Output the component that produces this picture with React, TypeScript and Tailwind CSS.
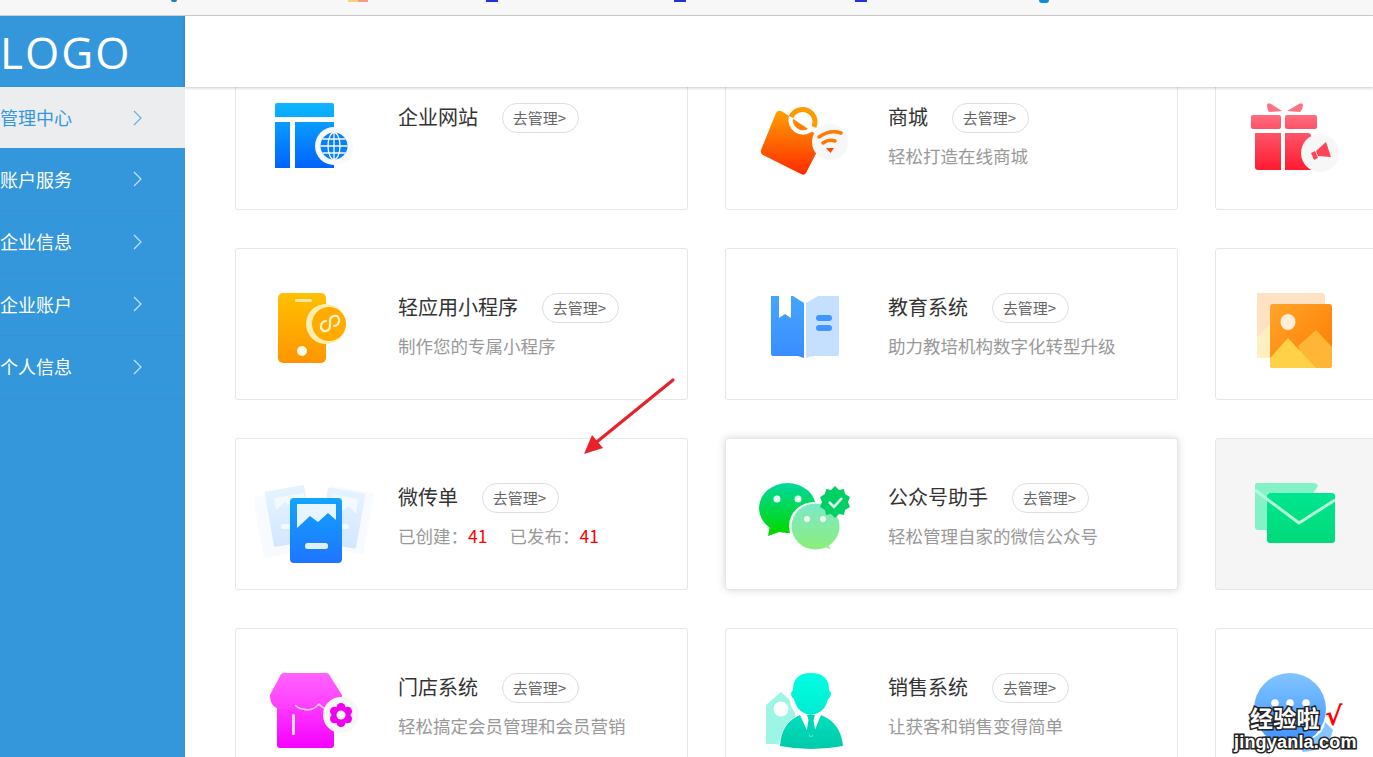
import type { ReactNode } from "react";

const menu = ["管理中心", "账户服务", "企业信息", "企业账户", "个人信息"];

function Grad({ id, from, to }: { id: string; from: string; to: string }) {
  return (
    <linearGradient id={id} x1="0" y1="0" x2="0" y2="1">
      <stop offset="0" stopColor={from} />
      <stop offset="1" stopColor={to} />
    </linearGradient>
  );
}

function IconBox({ children }: { children: ReactNode }) {
  return (
    <svg width="120" height="100" viewBox="0 0 120 100" className="mr-[23px] shrink-0">
      {children}
    </svg>
  );
}

function SiteIcon() {
  return (
    <IconBox>
      <defs>
        <Grad id="site1" from="#12b5ff" to="#06aaff" />
        <Grad id="site2" from="#0a9cff" to="#0062ff" />
      </defs>
      <path d="M20 7a2 2 0 0 1 2-2h55a2 2 0 0 1 2 2v12H20z" fill="url(#site1)" />
      <rect x="20" y="24" width="15" height="46" fill="url(#site2)" />
      <rect x="40" y="24" width="39" height="46" fill="url(#site2)" />
      <circle cx="79" cy="48" r="19" fill="#f8f9fb" />
      <circle cx="79" cy="48" r="13.5" fill="#0a80f5" />
      <g fill="none" stroke="#f8f9fb" strokeWidth="1.3">
        <ellipse cx="79" cy="48" rx="6" ry="13.5" />
        <path d="M79 34.5v27M65.5 48h27M67.5 41h23M67.5 55h23" />
      </g>
    </IconBox>
  );
}

function ShopIcon() {
  return (
    <IconBox>
      <defs>
        <Grad id="shop1" from="#ffa000" to="#ff2a00" />
      </defs>
      <path d="M38 14l37 25q3 2 2 5L61 75q-2 3-5 1L18 57q-3-2-2-5L31 15q2-4 7-1z" fill="url(#shop1)" />
      <path d="M46 19A12.500 12.500 0 0 0 65.500 32" fill="none" stroke="#fff" strokeWidth="4.500" strokeLinecap="round" />
      <path d="M46 19A12.500 12.500 0 1 1 69 29" fill="none" stroke="#ff9a00" strokeWidth="5" />
      <circle cx="85" cy="44" r="18" fill="#f7f7f7" />
      <g fill="none" stroke="#ff7a00" strokeWidth="3.500" strokeLinecap="round">
        <path d="M74 39q11-8 22-4" />
        <path d="M78 45q6-4 12-2" />
      </g>
      <path d="M81 50l8 0-3.500 5z" fill="#ff4b00" />
    </IconBox>
  );
}

function GiftIcon() {
  return (
    <IconBox>
      <defs>
        <Grad id="gift1" from="#ff6c7c" to="#ff5268" />
        <Grad id="gift2" from="#ff5468" to="#ff1a2e" />
      </defs>
      <path d="M32 7q1-3 4-1l11 7-13 1q-2-3-2-7zM68 7q-1-3-4-1l-12 7 13 1q3-3 3-7z" fill="#ff7083" />
      <rect x="16" y="17" width="30" height="14" rx="2" fill="url(#gift1)" />
      <rect x="50" y="17" width="32" height="14" rx="2" fill="url(#gift1)" />
      <path d="M20 35h26v37H23a3 3 0 0 1-3-3z" fill="url(#gift2)" />
      <path d="M50 35h23a3 3 0 0 1 3 3v34H50z" fill="url(#gift2)" />
      <circle cx="85" cy="55" r="19" fill="#f7f7f7" />
      <path d="M81 53l10-9 5 15-13-1z" fill="#ff4458" />
      <path d="M76 55l4-2 3 7-4 2z" fill="#ff4458" />
    </IconBox>
  );
}

function PhoneIcon() {
  return (
    <IconBox>
      <defs>
        <Grad id="phone1" from="#ffc000" to="#ff9500" />
      </defs>
      <rect x="23" y="5" width="48" height="70" rx="5" fill="url(#phone1)" />
      <rect x="40" y="11" width="17" height="3" rx="1.500" fill="#ffe9a8" />
      <circle cx="47" cy="63" r="5" fill="#fffbe8" />
      <circle cx="71" cy="36" r="20" fill="#fdeeb2" />
      <circle cx="74" cy="36" r="17" fill="#ffab00" />
      <path d="M66 40c2 5 9 4 9-3v-4c0-6 8-7 9-2 1 4-2 7-5 7M66 40c-1-4 2-7 5-7" fill="none" stroke="#fff3c8" strokeWidth="2.200" strokeLinecap="round" />
    </IconBox>
  );
}

function BookIcon() {
  return (
    <IconBox>
      <defs>
        <Grad id="book1" from="#44a6ff" to="#3a8cff" />
      </defs>
      <path d="M26 8h8v22l6-4 6 4V8h2l11 7v55l-6-2H28a2 2 0 0 1-2-2z" fill="url(#book1)" />
      <path d="M61 15l12-7h21v58a2 2 0 0 1-2 2H67l-6 2z" fill="#c5e0ff" />
      <rect x="71" y="27" width="16" height="6" rx="3" fill="#3f96ff" />
      <rect x="71" y="37" width="16" height="6" rx="3" fill="#3f96ff" />
    </IconBox>
  );
}

function PictureIcon() {
  return (
    <IconBox>
      <defs>
        <linearGradient id="pic1" x1="0" y1="0" x2="1" y2="1">
          <stop offset="0" stopColor="#ffa52a" />
          <stop offset="1" stopColor="#ff7a00" />
        </linearGradient>
      </defs>
      <path d="M22 5h65a3 3 0 0 1 3 3v62H22z" fill="#ffe2c4" />
      <path d="M22 50l13-14v34H22z" fill="#fff0c4" />
      <rect x="35" y="16" width="62" height="64" rx="3" fill="url(#pic1)" />
      <ellipse cx="53" cy="34" rx="7.500" ry="8" fill="#ffeed8" />
      <path d="M63 58l18-16 16 17v18a3 3 0 0 1-3 3H72z" fill="#ffb637" />
      <path d="M35 70l18-20 28 30H38a3 3 0 0 1-3-3z" fill="#ffd148" />
    </IconBox>
  );
}

function FlyerIcon() {
  return (
    <IconBox>
      <defs>
        <Grad id="fly1" from="#12a4ff" to="#1e74ff" />
        <Grad id="fly2" from="#e4f3ff" to="#d2e7ff" />
      </defs>
      <rect x="3" y="14" width="52" height="62" transform="rotate(-10 29 45)" fill="#f7fbff" />
      <rect x="70" y="11" width="44" height="62" transform="rotate(10 92 42)" fill="#f7fbff" />
      <rect x="14" y="10" width="40" height="56" rx="2" transform="rotate(-10 34 38)" fill="url(#fly2)" />
      <rect x="68" y="12" width="38" height="56" rx="2" transform="rotate(10 87 40)" fill="url(#fly2)" />
      <path d="M19 20l30-5 3 14-8-7-8 6-6-4-9 8z" fill="#f2f9ff" />
      <path d="M77 16l26 5-2 15-7-8-7 5-8-3z" fill="#f2f9ff" />
      <rect x="26" y="46" width="12" height="5" rx="2.500" fill="#f2f9ff" />
      <rect x="85" y="46" width="9" height="5" rx="2.500" fill="#f2f9ff" />
      <rect x="35" y="20" width="52" height="65" rx="4" fill="url(#fly1)" />
      <path d="M42 26H81V42L73 35 63 44 55 38 42 50z" fill="#e8f5ff" />
      <rect x="50" y="65" width="23" height="6" rx="2.500" fill="#dff0ff" />
    </IconBox>
  );
}

function WechatIcon() {
  return (
    <IconBox>
      <defs>
        <Grad id="we1" from="#00d8a0" to="#00d900" />
        <Grad id="we2" from="#7be9c8" to="#8ced7c" />
      </defs>
      <path d="M25 47l-2 11 14-5z" fill="#00d900" />
      <ellipse cx="42.500" cy="30" rx="28.500" ry="25" fill="url(#we1)" />
      <circle cx="32" cy="21" r="3.500" fill="#e8fff4" />
      <circle cx="53" cy="21" r="3.500" fill="#e8fff4" />
      <path d="M79 62l7 9-14-4z" fill="#8ced7c" />
      <ellipse cx="69.500" cy="48" rx="25.500" ry="24" fill="#f4fff8" />
      <ellipse cx="70.500" cy="48.500" rx="24" ry="23" fill="url(#we2)" />
      <circle cx="62" cy="41" r="3" fill="#f0fff8" />
      <circle cx="78" cy="41" r="3" fill="#f0fff8" />
      <path d="M90 8l4 4 5-1 1 5 5 3-2 5 2 5-5 3-1 5-5-1-4 4-4-4-5 1-1-5-5-3 2-5-2-5 5-3 1-5 5 1z" fill="#00cf63" />
      <path d="M84 24l5 5 8-9" fill="none" stroke="#e8fff0" strokeWidth="2.500" />
    </IconBox>
  );
}

function MailIcon() {
  return (
    <IconBox>
      <defs>
        <Grad id="mail1" from="#00e690" to="#00da78" />
      </defs>
      <path d="M22 5h56q4 0 5 3l-5 7H32v37h-9a3 3 0 0 1-3-3V7a2 2 0 0 1 2-2z" fill="#83f2c6" />
      <rect x="32" y="15" width="68" height="50" rx="3" fill="url(#mail1)" />
      <path d="M20 12L64 45 100 22" fill="none" stroke="#b8f8dc" strokeWidth="3" strokeLinejoin="round" />
    </IconBox>
  );
}

function StoreIcon() {
  return (
    <IconBox>
      <defs>
        <Grad id="store1" from="#ff63ff" to="#ff3cff" />
        <Grad id="store2" from="#ff45ff" to="#f500ff" />
      </defs>
      <rect x="22" y="30" width="57" height="50" rx="3" fill="url(#store2)" />
      <path d="M29 5H71Q74 5 75 8L87 27Q87 40 76 41 68 41 64 35 56 45 46 40 42 38 40 36 34 42 26 41 15 40 15 27L25 8Q26 5 29 5Z" fill="url(#store1)" />
      <path d="M40 37Q44 41 48 41 57 44 64 36 68 41 74 41" fill="none" stroke="#ffd0ff" strokeWidth="1.500" />
      <rect x="37" y="46" width="3" height="21" rx="1.500" fill="#ffd9ff" />
      <circle cx="86" cy="47" r="18" fill="#f8f7f8" />
      <g fill="#f000f0">
        <circle cx="86" cy="39.500" r="4.500" />
        <circle cx="92.500" cy="43.250" r="4.500" />
        <circle cx="92.500" cy="50.750" r="4.500" />
        <circle cx="86" cy="54.500" r="4.500" />
        <circle cx="79.500" cy="50.750" r="4.500" />
        <circle cx="79.500" cy="43.250" r="4.500" />
        <circle cx="86" cy="47" r="7" />
      </g>
      <circle cx="86" cy="47" r="4.500" fill="#f8f7f8" />
    </IconBox>
  );
}

function PersonIcon() {
  return (
    <IconBox>
      <defs>
        <Grad id="per1" from="#00ffe4" to="#00ecd0" />
        <Grad id="per2" from="#00dfbe" to="#00caa8" />
      </defs>
      <path d="M36 24l14 13v39H21V37z" fill="#9df5e6" />
      <circle cx="36" cy="41" r="7.500" fill="#fff" />
      <ellipse cx="66" cy="27" rx="22" ry="26" fill="#fff" />
      <path d="M48 22q0-17 18-17t18 17l2 3q0 4-3 6-3 14-17 16-14-2-17-16-3-2-3-6z" fill="url(#per1)" />
      <path d="M34 79q1-25 22-33l10 4 10-4q20 8 22 33-32 6-64 0z" fill="#fff" />
      <path d="M35 78q1-23 20-31l10 22 1-1 1 1 9-22q20 8 22 31-32 6-63 0z" fill="url(#per2)" />
      <path d="M62 47h8l-1.500 5 2 12-4.500 5-4.500-5 2-12z" fill="#00d6b4" />
    </IconBox>
  );
}

function BubbleIcon() {
  return (
    <IconBox>
      <defs>
        <Grad id="bub1" from="#80c5ff" to="#3f90ff" />
      </defs>
      <path d="M60 74q28-2 30-20l8 8q-4 20-30 22z" fill="#86c5ff" />
      <circle cx="55" cy="41" r="36" fill="url(#bub1)" />
      <circle cx="40" cy="35" r="3.800" fill="#fff" />
      <circle cx="55" cy="35" r="3.800" fill="#fff" />
      <circle cx="71" cy="35" r="3.800" fill="#fff" />
    </IconBox>
  );
}

function Card({
  icon,
  title,
  desc,
  stats,
  className = "border-[#e6e6e6] bg-white",
}: {
  icon: ReactNode;
  title?: string;
  desc?: string;
  stats?: boolean;
  className?: string;
}) {
  return (
    <div className={`flex h-[152px] rounded-[3px] border pl-[19px] pt-[39px] ${className}`}>
      {icon}
      {title && (
        <div className="pt-[5px]">
          <div className="flex h-[30px] items-center">
            <span className="pb-[2px] text-[20px] leading-[30px] text-[#333]">{title}</span>
            <span className="ml-[24px] flex h-[30px] w-[77px] items-center justify-center rounded-full border border-[#dedede] pr-[2px] text-[15px] text-[#666]">
              去管理&gt;
            </span>
          </div>
          <div className="mt-[10px] whitespace-nowrap text-[17.5px] leading-[26px] text-[#999]">
            {stats ? (
              <>
                已创建：<span className="text-[#f00]">41</span>
                <span className="ml-[22px]">已发布：</span>
                <span className="text-[#f00]">41</span>
              </>
            ) : (
              desc
            )}
          </div>
        </div>
      )}
    </div>
  );
}

export default function App() {
  return (
    <div className="relative flex h-[757px] flex-col overflow-hidden bg-white font-['Noto_Sans_CJK_SC','Noto_Sans',sans-serif]">
      <div className="flex h-4 shrink-0 items-start border-b border-[#cfcfcf] bg-[#f7f7f7]">
        <span className="ml-[171px] h-[2px] w-[6px] rounded-b-full bg-[#1a7fc4]" />
        <span className="ml-[171px] h-[2px] w-[10px] bg-[#fdd27a]" />
        <span className="h-[2px] w-[10px] bg-[#ff9a8a]" />
        <span className="ml-[118px] h-[2px] w-[12px] bg-[#2233dd]" />
        <span className="ml-[176px] h-[2px] w-[12px] bg-[#2233dd]" />
        <span className="ml-[169px] h-[2px] w-[12px] bg-[#2233dd]" />
        <span className="ml-[172px] h-[3px] w-[10px] rounded-b-full bg-[#0d8ad8]" />
      </div>

      <div className="flex min-h-0 flex-1">
        <aside className="w-[185px] shrink-0 bg-[#3497dc]">
          <div className="h-[71px] text-[44px] leading-[72px] tracking-[2px] text-white font-['Open_Sans',sans-serif]">
            LOGO
          </div>
          {menu.map((item, i) => (
            <div
              key={item}
              className={
                i === 0
                  ? "mb-[0.5px] flex h-[61px] items-center justify-between bg-[#ecedef] pr-[43px] text-[18px] text-[#3497dc]"
                  : "flex h-[62.5px] items-center justify-between border-b border-[#3a90d2] pr-[43px] text-[18px] text-white"
              }
            >
              <span>{item}</span>
              <svg width="9" height="16" viewBox="0 0 9 16" fill="none" stroke="currentColor" strokeWidth="1.100" opacity="0.75">
                <path d="M1 1l7 7-7 7" />
              </svg>
            </div>
          ))}
        </aside>

        <main className="flex min-w-0 flex-1 flex-col">
          <header className="relative z-10 h-[71px] shrink-0 bg-white shadow-[0_1px_3px_rgba(0,0,0,0.22)]" />
          <div className="min-h-0 flex-1 overflow-hidden">
            <div className="ml-[50px] mt-[-29px] grid w-max grid-cols-[453px_453px_453px] gap-x-[37px] gap-y-[38px]">
              <Card icon={<SiteIcon />} title="企业网站" />
              <Card icon={<ShopIcon />} title="商城" desc="轻松打造在线商城" />
              <Card icon={<GiftIcon />} />
              <Card icon={<PhoneIcon />} title="轻应用小程序" desc="制作您的专属小程序" />
              <Card icon={<BookIcon />} title="教育系统" desc="助力教培机构数字化转型升级" />
              <Card icon={<PictureIcon />} />
              <Card icon={<FlyerIcon />} title="微传单" stats />
              <Card
                icon={<WechatIcon />}
                title="公众号助手"
                desc="轻松管理自家的微信公众号"
                className="border-[#e6e6e6] bg-white shadow-[0_0_8px_rgba(0,0,0,0.16)]"
              />
              <Card icon={<MailIcon />} className="border-[#e6e6e6] bg-[#f5f5f5]" />
              <Card icon={<StoreIcon />} title="门店系统" desc="轻松搞定会员管理和会员营销" />
              <Card icon={<PersonIcon />} title="销售系统" desc="让获客和销售变得简单" />
              <Card icon={<BubbleIcon />} />
            </div>
          </div>
        </main>
      </div>

      {/* annotation arrow drawn on top of the shot */}
      <svg className="absolute left-[575px] top-[372px] z-20" width="110" height="90" viewBox="0 0 110 90">
        <path d="M98 8L18 73" stroke="#e8212b" strokeWidth="3.200" strokeLinecap="round" />
        <path d="M9 82l8-19 11 13z" fill="#e8212b" />
      </svg>

      {/* watermark */}
      <div className="absolute bottom-[6px] right-[13px] z-20 w-[126px] font-bold text-white">
        <div className="flex h-[30px] items-start pl-[16px] pt-[3px] text-[23px] leading-none tracking-[0.3px] [-webkit-text-stroke:3px_#222] [paint-order:stroke_fill]">
          经验啦
          <span className="ml-[5px] mt-[-3px] text-[26px] leading-[26px] text-[#f00] [-webkit-text-stroke:0] font-['DejaVu_Sans',sans-serif]">√</span>
        </div>
        <div className="whitespace-nowrap text-[18px] leading-[18px] tracking-[0.2px] [-webkit-text-stroke:3px_#222] [paint-order:stroke_fill] font-['Liberation_Sans',sans-serif]">
          jingyanla.com
        </div>
      </div>
    </div>
  );
}
